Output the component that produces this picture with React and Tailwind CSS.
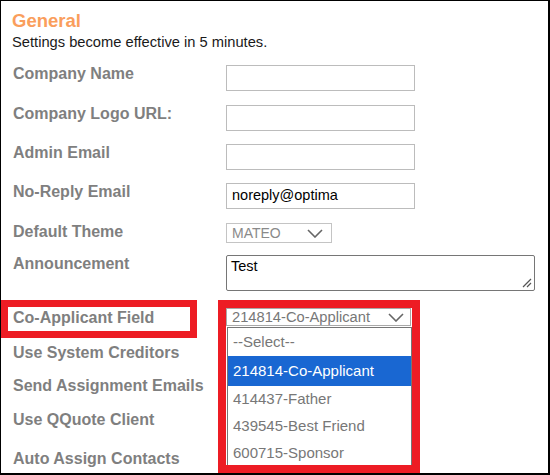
import React from "react";

const Chevron = ({ className }) => (
  <svg className={className} width="16" height="9" viewBox="0 0 16 9" fill="none">
    <path d="M1 1L8 8L15 1" stroke="#666" strokeWidth="1.6" />
  </svg>
);

const Label = ({ children }) => (
  <div className="w-[214px] shrink-0 pl-[1px] text-[16px] leading-[18px] font-bold text-[#7f7f7f] whitespace-nowrap">{children}</div>
);

const TextInput = ({ value }) => (
  <div className="w-[189px] h-[26px] border border-[#bcbcbc] bg-white flex items-center pl-[5px] text-[14.5px] text-black">
    {value}
  </div>
);

export default function App() {
  return (
    <div
      className="relative w-[550px] h-[475px] bg-white border-l border-t border-r-2 border-b-2 border-black overflow-hidden"
      style={{ fontFamily: '"Liberation Sans", Arial, sans-serif' }}
    >
      <div className="pl-[11px] pt-[9px]">
        <div className="text-[18.5px] leading-[22px] font-bold text-[#fa9e5c]">General</div>
        <div className="mt-[1px] text-[14.7px] leading-[18px] text-[#1a1a1a]">Settings become effective in 5 minutes.</div>

        <div className="mt-[14px] flex flex-col">
          <div className="h-[40px] flex items-start">
            <Label>Company Name</Label>
            <TextInput value="" />
          </div>
          <div className="h-[39px] flex items-start">
            <Label>Company Logo URL:</Label>
            <TextInput value="" />
          </div>
          <div className="h-[39px] flex items-start">
            <Label>Admin Email</Label>
            <TextInput value="" />
          </div>
          <div className="h-[40px] flex items-start">
            <Label>No-Reply Email</Label>
            <TextInput value="noreply@optima" />
          </div>
          <div className="h-[32px] flex items-start">
            <Label>Default Theme</Label>
            <div className="w-[106px] h-[20px] border border-[#c4c4c4] flex items-center justify-between pl-[5px] pr-[8px] text-[14px] text-[#8a8a8a]">
              <span>MATEO</span>
              <Chevron />
            </div>
          </div>
          <div className="h-[54px] flex items-start">
            <Label>Announcement</Label>
            <div className="relative w-[309px] h-[36px] border border-[#767676] rounded-[2px] pl-[4px] pt-[1px] text-[14.5px] leading-[18px] text-black">
              Test
              <svg className="absolute right-[2px] bottom-[2px]" width="12" height="12" viewBox="0 0 12 12">
                <path d="M11 3L3 11M11 7L7 11" stroke="#555" strokeWidth="1.2" />
              </svg>
            </div>
          </div>
          <div className="h-[35px] flex items-start">
            <Label>Co-Applicant Field</Label>
            <div className="-mt-[1px] w-[185px] h-[18px] border border-[#a9a9a9] flex items-center justify-between pl-[5px] pr-[6px] text-[14.7px] text-[#777]">
              <span>214814-Co-Applicant</span>
              <Chevron />
            </div>
          </div>
          <div className="h-[33px] flex items-start">
            <Label>Use System Creditors</Label>
          </div>
          <div className="h-[34px] flex items-start">
            <Label>Send Assignment Emails</Label>
          </div>
          <div className="h-[39px] flex items-start">
            <Label>Use QQuote Client</Label>
          </div>
          <div className="h-[20px] flex items-start">
            <Label>Auto Assign Contacts</Label>
          </div>
        </div>
      </div>

      {/* dropdown list */}
      <div className="absolute left-[226px] top-[326px] w-[185px] h-[141px] border border-[#767676] bg-white flex flex-col text-[15px] text-[#777]">
        <div className="h-[28px] flex items-center pl-[5px]">--Select--</div>
        <div className="h-[30px] flex items-center pl-[5px] bg-[#1967d2] text-white">214814-Co-Applicant</div>
        <div className="h-[27px] flex items-center pl-[5px]">414437-Father</div>
        <div className="h-[27px] flex items-center pl-[5px]">439545-Best Friend</div>
        <div className="h-[27px] flex items-center pl-[5px]">600715-Sponsor</div>
      </div>

      {/* red annotation boxes */}
      <div className="absolute left-0 top-[299px] w-[196px] h-[38px] border-[7px] border-[#ed1c24]" />
      <div className="absolute left-[217px] top-[299px] w-[202px] h-[173px] border-[8px] border-[#ed1c24]" />
    </div>
  );
}
